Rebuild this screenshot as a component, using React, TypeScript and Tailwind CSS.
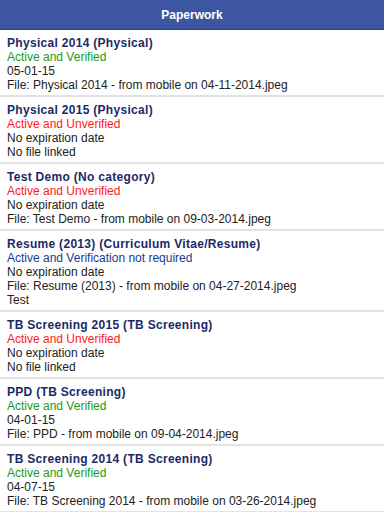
type Doc = {
  title: string;
  status: "verified" | "unverified" | "notRequired";
  lines: string[];
};

const docs: Doc[] = [
  {
    title: "Physical 2014 (Physical)",
    status: "verified",
    lines: ["05-01-15", "File: Physical 2014 - from mobile on 04-11-2014.jpeg"],
  },
  {
    title: "Physical 2015 (Physical)",
    status: "unverified",
    lines: ["No expiration date", "No file linked"],
  },
  {
    title: "Test Demo (No category)",
    status: "unverified",
    lines: ["No expiration date", "File: Test Demo - from mobile on 09-03-2014.jpeg"],
  },
  {
    title: "Resume (2013) (Curriculum Vitae/Resume)",
    status: "notRequired",
    lines: ["No expiration date", "File: Resume (2013) - from mobile on 04-27-2014.jpeg", "Test"],
  },
  {
    title: "TB Screening 2015 (TB Screening)",
    status: "unverified",
    lines: ["No expiration date", "No file linked"],
  },
  {
    title: "PPD (TB Screening)",
    status: "verified",
    lines: ["04-01-15", "File: PPD - from mobile on 09-04-2014.jpeg"],
  },
  {
    title: "TB Screening 2014 (TB Screening)",
    status: "verified",
    lines: ["04-07-15", "File: TB Screening 2014 - from mobile on 03-26-2014.jpeg"],
  },
];

const statusText = {
  verified: { label: "Active and Verified", cls: "text-[#1a9a1a]" },
  unverified: { label: "Active and Unverified", cls: "text-[#ff1a1a]" },
  notRequired: { label: "Active and Verification not required", cls: "text-[#213a8f]" },
};

function DocRow({ doc }: { doc: Doc }) {
  const s = statusText[doc.status];
  return (
    <li className="border-b-2 border-[#e3e3e3] px-[7px] pb-[3px] pt-[6px] leading-[14px]">
      <p className="font-bold tracking-[0.3px] text-[#1b2a66]">{doc.title}</p>
      <p className={s.cls}>{s.label}</p>
      {doc.lines.map((l, i) => (
        <p key={i} className="text-[#222]">
          {l}
        </p>
      ))}
    </li>
  );
}

export default function App() {
  return (
    <div className="h-[512px] w-[384px] overflow-hidden bg-white font-['Liberation_Sans',Arial,sans-serif] text-[12px]">
      <header className="flex h-[30px] items-center justify-center border-b border-[#2f4485] bg-[#3d56a1]">
        <h1 className="text-[12px] font-bold text-white">Paperwork</h1>
      </header>
      <ul>
        {docs.map((d) => (
          <DocRow key={d.title} doc={d} />
        ))}
      </ul>
    </div>
  );
}
